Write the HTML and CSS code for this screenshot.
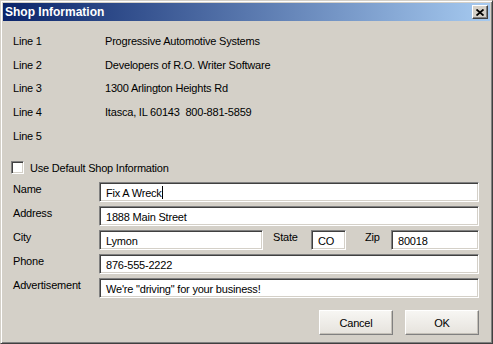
FILE: index.html
```html
<!DOCTYPE html>
<html lang="en">
<head>
    <meta charset="UTF-8">
    <title>Shop Information</title>
    <link rel="stylesheet" href="styles.css">
</head>
<body>
    <div class="window">
        <div class="titlebar">
            <span class="title">Shop Information</span>
            <div class="close-btn">
                <svg width="8" height="7" viewBox="0 0 8 7">
                    <path d="M0.5 0.5 L7.5 6.5 M7.5 0.5 L0.5 6.5" stroke="#000" stroke-width="1.8"/>
                </svg>
            </div>
        </div>

        <div class="content">
            <div class="lines">
                <div class="line-label">Line 1</div>
                <div>Progressive Automotive Systems</div>
                <div class="line-label">Line 2</div>
                <div>Developers of R.O. Writer Software</div>
                <div class="line-label">Line 3</div>
                <div>1300 Arlington Heights Rd</div>
                <div class="line-label">Line 4</div>
                <div>Itasca, IL 60143&nbsp; 800-881-5859</div>
                <div class="line-label">Line 5</div>
                <div></div>
            </div>

            <div class="check-row">
                <span class="checkbox"></span>
                <span>Use Default Shop Information</span>
            </div>

            <div class="form">
                <div class="form-label">Name</div>
                <div class="field">Fix A Wreck<span class="caret"></span></div>

                <div class="form-label">Address</div>
                <div class="field">1888 Main Street</div>

                <div class="form-label">City</div>
                <div class="city-row">
                    <div class="field city">Lymon</div>
                    <div class="form-label state-label">State</div>
                    <div class="field state">CO</div>
                    <div class="form-label zip-label">Zip</div>
                    <div class="field zip">80018</div>
                </div>

                <div class="form-label">Phone</div>
                <div class="field">876-555-2222</div>

                <div class="form-label">Advertisement</div>
                <div class="field">We're "driving" for your business!</div>
            </div>

            <div class="buttons">
                <div class="button">Cancel</div>
                <div class="button">OK</div>
            </div>
        </div>
    </div>
</body>
</html>
```

FILE: styles.css
```css
body {
    margin: 0;
    font-family: "Liberation Sans", Arial, sans-serif;
    font-size: 11px;
    letter-spacing: -0.2px;
    color: #000;
}
.window {
    width: 493px;
    height: 344px;
    box-sizing: border-box;
    background: #d4d0c8;
    border: 1px solid;
    border-color: #d4d0c8 #404040 #404040 #d4d0c8;
    box-shadow: inset 1px 1px #fff, inset -1px -1px #808080;
    padding: 2px;
}
.titlebar {
    height: 18px;
    display: flex;
    align-items: center;
    justify-content: space-between;
    padding: 0 2px 0 2px;
    background: linear-gradient(to right, #0a246a, #a6caf0);
}
.title {
    color: #fff;
    font-weight: bold;
    font-size: 12px;
    letter-spacing: 0;
}
.close-btn {
    width: 16px;
    height: 14px;
    box-sizing: border-box;
    background: #d4d0c8;
    border: 1px solid;
    border-color: #fff #404040 #404040 #fff;
    box-shadow: inset -1px -1px #808080;
    display: flex;
    align-items: center;
    justify-content: center;
}
.content {
    padding: 8px 11px 0 10px;
}
.lines {
    display: grid;
    grid-template-columns: 92px 1fr;
    grid-auto-rows: 23.7px;
    align-items: center;
}
.check-row {
    display: flex;
    align-items: center;
    gap: 6px;
    height: 13px;
    margin: 14px 0 0 -2px;
}
.checkbox {
    width: 13px;
    height: 13px;
    box-sizing: border-box;
    background: #fff;
    border: 1px solid;
    border-color: #808080 #fff #fff #808080;
    box-shadow: inset 1px 1px #404040, inset -1px -1px #d4d0c8;
}
.form {
    display: grid;
    grid-template-columns: 86px 1fr;
    grid-auto-rows: 20px;
    row-gap: 4px;
    margin-top: 8px;
}
.form-label {
    line-height: 14px;
    align-self: start;
}
.field {
    height: 20px;
    box-sizing: border-box;
    background: #fff;
    border: 1px solid;
    border-color: #808080 #fff #fff #808080;
    box-shadow: inset 1px 1px #404040, inset -1px -1px #d4d0c8;
    padding: 2px 6px 0 6px;
    line-height: 16px;
    white-space: nowrap;
}
.caret {
    display: inline-block;
    width: 1px;
    height: 13px;
    background: #000;
    vertical-align: -2px;
}
.city-row {
    display: flex;
}
.city {
    width: 164px;
}
.state-label {
    margin-left: 10px;
    width: 38px;
}
.state {
    width: 35px;
}
.zip-label {
    margin-left: 19px;
    width: 26px;
}
.zip {
    flex: 1;
}
.buttons {
    display: flex;
    justify-content: flex-end;
    gap: 12px;
    margin-top: 12px;
}
.button {
    width: 74px;
    height: 25px;
    box-sizing: border-box;
    display: flex;
    align-items: center;
    justify-content: center;
    background: linear-gradient(#f7f6f3, #e6e3dd);
    border: 1px solid;
    border-color: #fff #808080 #808080 #fff;
    box-shadow: inset -1px -1px #c4c0b8;
    font-size: 11px;
}
```
